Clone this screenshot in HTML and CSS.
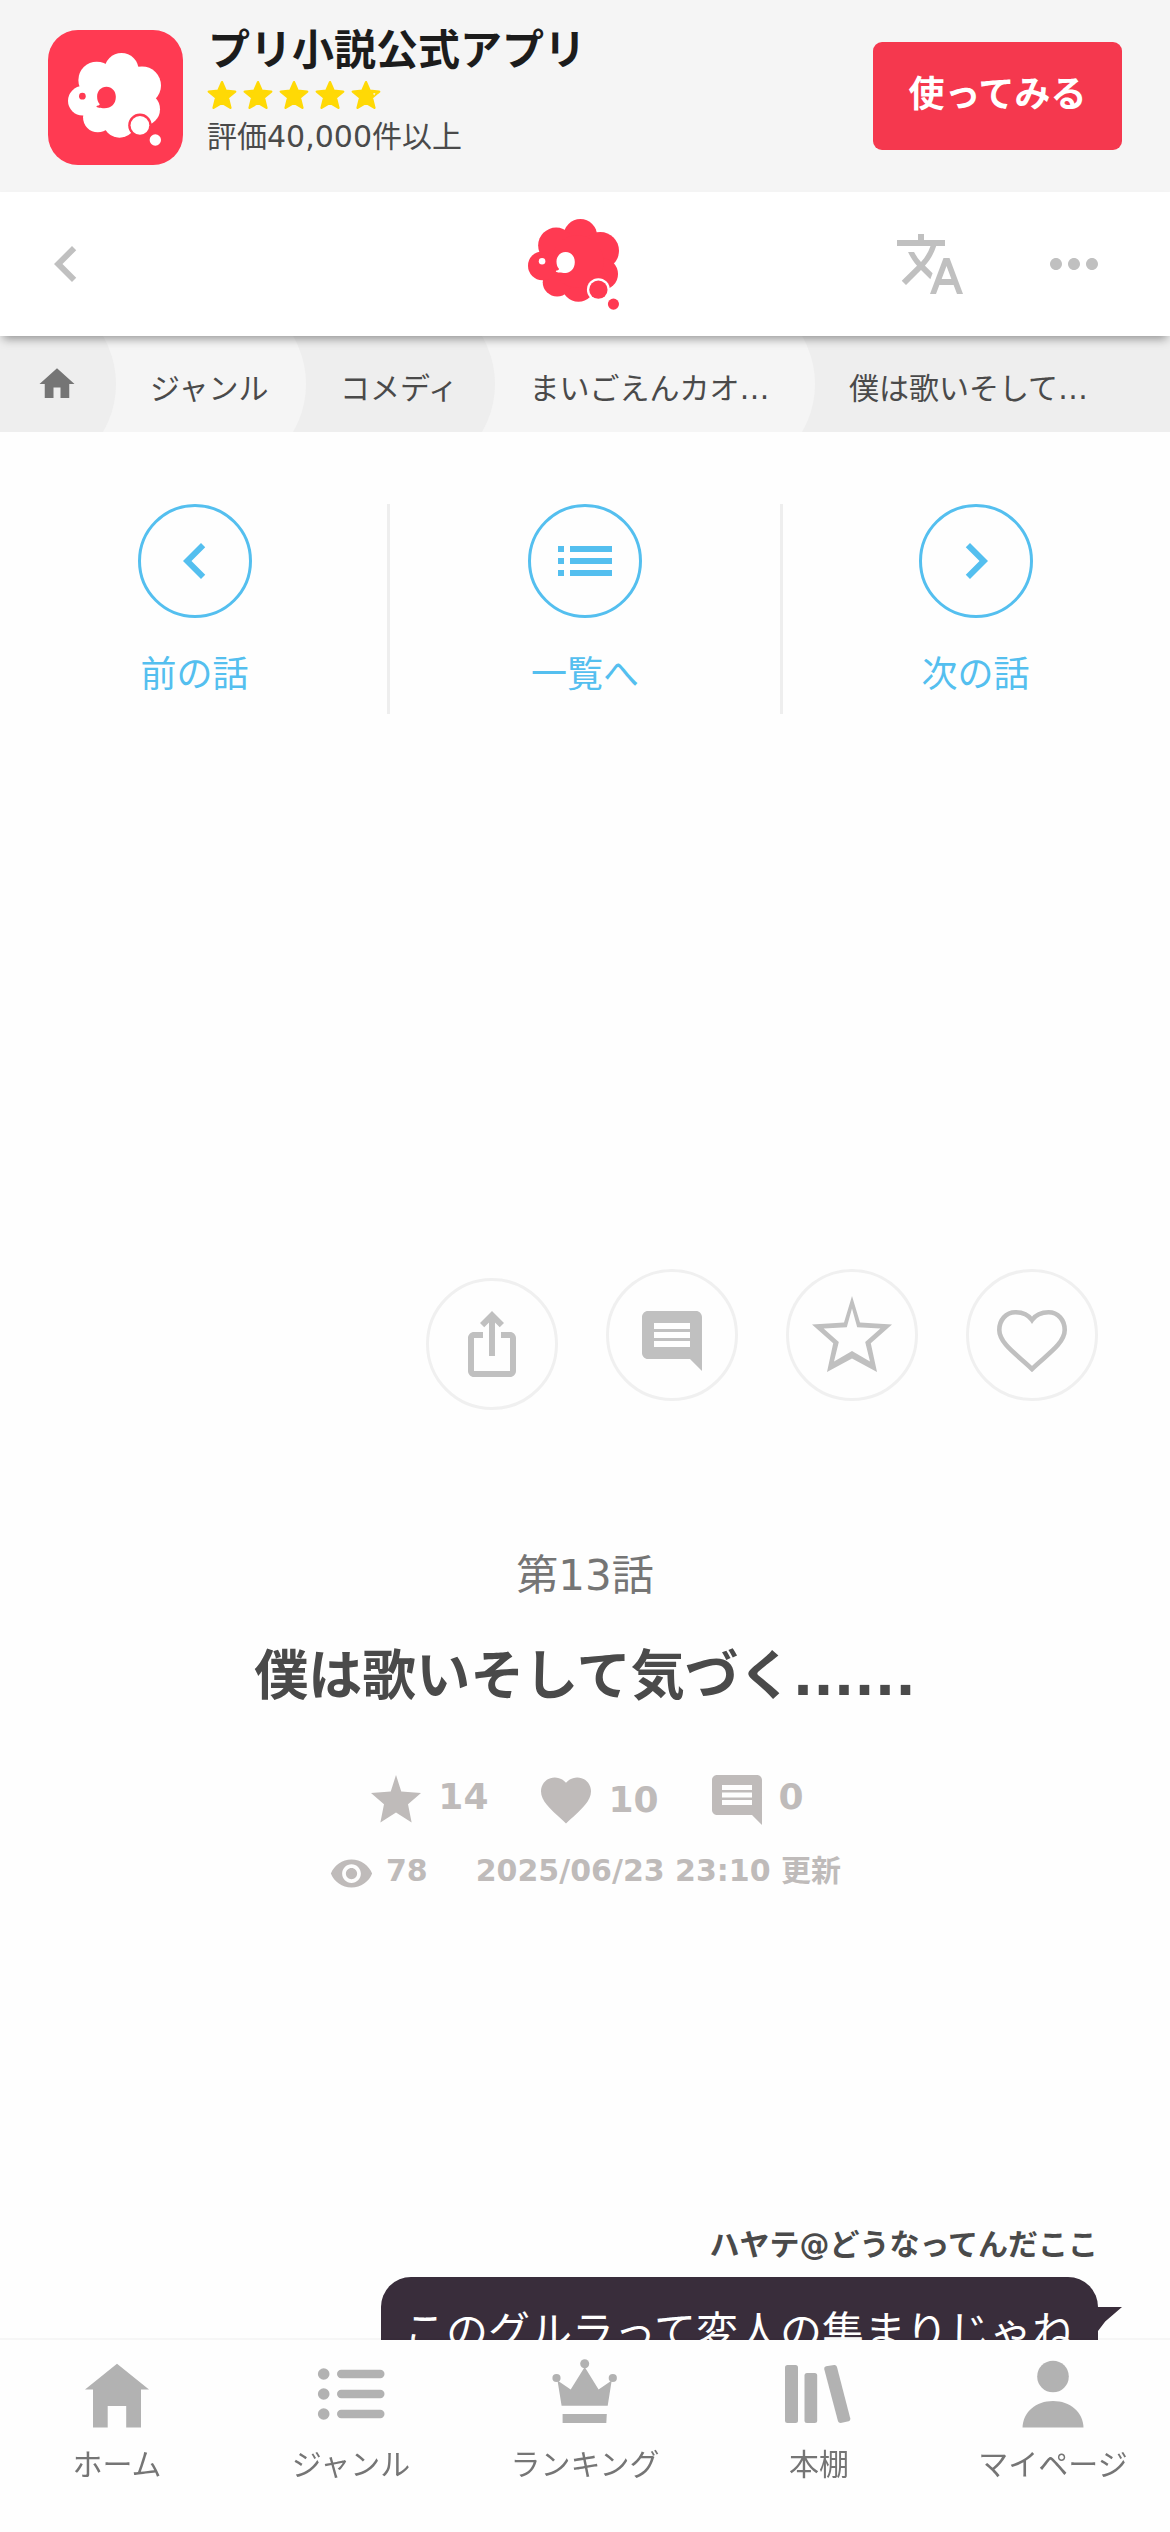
FILE: index.html
```html
<!DOCTYPE html>
<html lang="ja">
<head>
<meta charset="utf-8">
<title>僕は歌いそして気づく......</title>
<link rel="stylesheet" href="styles.css">
</head>
<body>
<svg class="defs" aria-hidden="true">
  <symbol id="sheep" viewBox="204 160 278 278">
    <g fill="currentColor">
      <circle cx="364" cy="211" r="51"/><circle cx="290" cy="241" r="55"/><circle cx="425" cy="257" r="57"/>
      <circle cx="430" cy="328" r="49"/><circle cx="358" cy="363" r="50"/><circle cx="293" cy="353" r="44"/>
      <circle cx="248" cy="303" r="44"/><circle cx="355" cy="290" r="80"/>
    </g>
    <g class="sheep-hole">
      <circle cx="247" cy="289" r="10"/>
      <path d="M291 290c0-16 12-29 28-29s28 13 28 30c0 22-14 34-34 34-12 0-23-1-24-5 0-3 8-2 10-7-5-5-8-13-8-23z"/>
      <circle cx="419" cy="376" r="35"/>
    </g>
    <circle cx="419" cy="376" r="28" fill="currentColor"/>
    <circle cx="465" cy="420" r="17" fill="currentColor"/>
  </symbol>
  <symbol id="rate-star" viewBox="0 0 30 30"><path d="M15 2.2l3.7 8.6 9.5.8-7.3 6.1 2.5 10.1L15 22.8l-8.4 5 2.5-10.1-7.3-6.1 9.5-.8z" fill="currentColor" stroke="currentColor" stroke-width="2.4" stroke-linejoin="round"/></symbol>
  <symbol id="left" viewBox="0 0 24 24"><path d="M15.41 7.41 14 6l-6 6 6 6 1.41-1.41L10.83 12z"/></symbol>
  <symbol id="right" viewBox="0 0 24 24"><path d="M10 6 8.59 7.41 13.17 12l-4.58 4.59L10 18l6-6z"/></symbol>
  <symbol id="comment" viewBox="0 0 24 24"><path d="M21.99 4c0-1.1-.89-2-1.99-2H4c-1.1 0-2 .9-2 2v12c0 1.1.9 2 2 2h14l4 4-.01-18zM18 14H6v-2h12v2zm0-3H6V9h12v2zm0-3H6V6h12v2z"/></symbol>
</svg>

<div class="banner">
  <div class="app-icon"><svg><use href="#sheep"/></svg></div>
  <div class="app-info">
    <p class="app-name">プリ小説公式アプリ</p>
    <div class="stars">
      <svg><use href="#rate-star"/></svg><svg><use href="#rate-star"/></svg><svg><use href="#rate-star"/></svg><svg><use href="#rate-star"/></svg>
      <svg viewBox="0 0 30 30"><use href="#rate-star"/><path class="star-nick" d="M22 13.500l2.500-.500-1.300 2.500zM25.500 15.500l2-1.500v3z"/></svg>
    </div>
    <p class="app-rating">評価40,000件以上</p>
  </div>
  <a class="use-button">使ってみる</a>
</div>

<header class="header">
  <svg class="icon"><use href="#left"/></svg>
  <svg class="logo"><use href="#sheep"/></svg>
  <div class="header-actions">
    <svg class="icon" viewBox="0 0 24 24"><path d="m12.87 15.07-2.54-2.51.03-.03c1.74-1.94 2.98-4.17 3.71-6.53H17V4h-7V2H8v2H1v1.99h11.17C11.5 7.92 10.44 9.75 9 11.35 8.07 10.32 7.3 9.19 6.69 8h-2c.73 1.63 1.73 3.17 2.98 4.56l-5.09 5.02L4 19l5-5 3.11 3.11.76-2.04zM18.5 10h-2L12 22h2l1.12-3h4.75L21 22h2l-4.5-12zm-2.62 7 1.62-4.33L19.12 17h-3.24z"/></svg>
    <svg class="icon" viewBox="0 0 24 24"><path d="M6 10c-1.1 0-2 .9-2 2s.9 2 2 2 2-.9 2-2-.9-2-2-2zm12 0c-1.1 0-2 .9-2 2s.9 2 2 2 2-.9 2-2-.9-2-2-2zm-6 0c-1.1 0-2 .9-2 2s.9 2 2 2 2-.9 2-2-.9-2-2-2z"/></svg>
  </div>
</header>

<ol class="crumbs">
  <li class="crumb crumb-home"><svg viewBox="0 0 24 24"><path d="M10 20v-6h4v6h5v-8h3L12 3 2 12h3v8z"/></svg></li>
  <li class="crumb">ジャンル</li>
  <li class="crumb">コメディ</li>
  <li class="crumb crumb-long"><span>まいごえんカオ…</span></li>
  <li class="crumb crumb-last">僕は歌いそして…</li>
</ol>

<main class="main">
  <nav class="pager">
    <a class="pager-link pager-prev"><span class="ring"><svg><use href="#left"/></svg></span>前の話</a>
    <a class="pager-link pager-list"><span class="ring"><svg viewBox="0 0 24 24"><path d="M3 13h2v-2H3v2zm0 4h2v-2H3v2zm0-8h2V7H3v2zm4 4h14v-2H7v2zm0 4h14v-2H7v2zM7 7v2h14V7H7z"/></svg></span>一覧へ</a>
    <a class="pager-link pager-next"><span class="ring"><svg><use href="#right"/></svg></span>次の話</a>
  </nav>

  <div class="actions">
    <span class="action action-share"><svg viewBox="0 0 24 24"><path d="m16 5-1.42 1.42-1.59-1.59V16h-1.98V4.83L9.42 6.42 8 5l4-4 4 4zm4 5v11c0 1.1-.9 2-2 2H6c-1.11 0-2-.9-2-2V10c0-1.11.89-2 2-2h3v2H6v11h12V10h-3V8h3c1.1 0 2 .89 2 2z"/></svg></span>
    <span class="action action-comment"><svg><use href="#comment"/></svg></span>
    <span class="action action-star"><svg viewBox="0 0 24 24"><path fill-rule="evenodd" d="M12 2 14 8.650 22 9.150 16.700 13.800 18.250 21 12 17.600 5.750 21 7.300 13.800 2 9.150 10 8.650zM12 5.100 10.700 9.800 4.900 10.150 8.700 13.500 7.500 18.400 12 15.750 16.500 18.400 15.300 13.500 19.100 10.150 13.300 9.800z"/></svg></span>
    <span class="action action-heart"><svg viewBox="0 0 70 62"><path d="M35 59C22 46 2.300 34 2.300 20 2.300 10 9 2.300 18.500 2.300 25 2.300 31 4.500 35 10 39 4.500 45 2.300 51.500 2.300 61 2.300 67.700 10 67.700 20 67.700 34 48 46 35 59z"/></svg></span>
  </div>

  <p class="chapter">第13話</p>
  <h1 class="title">僕は歌いそして気づく......</h1>
  <div class="stats">
    <span class="stat"><svg viewBox="0 0 24 24"><path d="M12 2 14.100 8.550 22 9.150 16.800 13.650 18.250 21 12 17 5.750 21 7.200 13.650 2 9.150 9.900 8.550z"/></svg>14</span>
    <span class="stat stat-likes"><svg viewBox="0 0 24 24"><path d="m12 21.350-1.450-1.320C5.400 15.360 2 12.280 2 8.500 2 5.420 4.420 3 7.500 3c1.740 0 3.410.810 4.500 2.090C13.090 3.810 14.760 3 16.500 3 19.580 3 22 5.420 22 8.500c0 3.780-3.400 6.860-8.550 11.540L12 21.350z"/></svg><b>10</b></span>
    <span class="stat"><svg><use href="#comment"/></svg>0</span>
  </div>
  <div class="meta">
    <span class="views"><svg viewBox="0 0 24 24"><path d="M12 4.500C7 4.500 2.730 7.610 1 12c1.730 4.390 6 7.500 11 7.500s9.270-3.110 11-7.500c-1.730-4.390-6-7.500-11-7.500zM12 17c-2.760 0-5-2.240-5-5s2.240-5 5-5 5 2.240 5 5-2.240 5-5 5zm0-8c-1.660 0-3 1.340-3 3s1.340 3 3 3 3-1.340 3-3-1.340-3-3-3z"/></svg>78</span>
    <span>2025/06/23 23:10 更新</span>
  </div>

  <section class="chat">
    <p class="speaker">ハヤテ@どうなってんだここ</p>
    <p class="bubble">このグルラって変人の集まりじゃね</p>
  </section>
</main>

<nav class="tabs">
  <a class="tab"><svg viewBox="81 2358 72 72"><path d="M117 2363.700 149 2389.500H141V2427.500H126.200V2406H107.700V2427.500H93V2389.500H85z"/></svg>ホーム</a>
  <a class="tab"><svg viewBox="315 2358 72 72"><circle cx="323.700" cy="2374" r="5.800"/><circle cx="323.700" cy="2394" r="5.800"/><circle cx="323.700" cy="2414" r="5.800"/><rect x="337" y="2369.800" width="47.500" height="8.400" rx="4.200"/><rect x="337" y="2389.800" width="47.500" height="8.400" rx="4.200"/><rect x="337" y="2409.800" width="47.500" height="8.400" rx="4.200"/></svg>ジャンル</a>
  <a class="tab"><svg viewBox="549 2358 72 72"><circle cx="584.700" cy="2363.700" r="4.500"/><circle cx="556.500" cy="2378" r="4.100"/><circle cx="612.800" cy="2378" r="4.100"/><path d="M557.500 2380.500 570.700 2389.500 584.700 2367 598.600 2389.500 611.700 2380.500 607.700 2405.800H561.600zM562.600 2414H606.800L606.300 2423H562.600z"/></svg>ランキング</a>
  <a class="tab"><svg viewBox="783 2358 72 72"><rect x="785" y="2365" width="13" height="58" rx="2.500"/><rect x="804.500" y="2373" width="12.700" height="50" rx="2.500"/><path d="M826 2366.300 834.200 2364.900Q836.200 2364.700 836.900 2366.700L850.300 2418.500Q850.700 2420.500 848.700 2421.300L840.700 2423.100Q838.700 2423.200 838 2421.300L824.200 2369Q823.900 2367 826 2366.300z"/></svg>本棚</a>
  <a class="tab"><svg viewBox="1017 2358 72 72"><circle cx="1053" cy="2376.500" r="15.800"/><path d="M1022.500 2427.500C1023 2412 1036 2401 1053 2401S1083 2412 1083.500 2427.500z"/></svg>マイページ</a>
</nav>
</body>
</html>
```
FILE: styles.css
```css
* { box-sizing: border-box; margin: 0; padding: 0; }

body {
  display: flex;
  flex-direction: column;
  width: 1170px;
  height: 2532px;
  overflow: hidden;
  background: #fefefe;
  color: #4a4a4a;
  font-family: "DejaVu Sans", "Noto Sans CJK JP", sans-serif;
  font-size: 30px;
}

svg { display: block; flex: none; fill: currentColor; }
.defs { display: none; }

/* App banner */
.banner {
  display: flex;
  flex: none;
  height: 192px;
  padding: 0 48px;
  background: #f5f5f5;
}
.app-icon {
  --hole: #ff3a52;
  width: 135px;
  height: 135px;
  margin-top: 30px;
  padding: 23px 0 0 20px;
  border-radius: 30px;
  background: #ff3a52;
  color: #fff;
}
.app-icon svg { width: 93px; height: 93px; }
.sheep-hole { fill: var(--hole); }
.app-info { flex: 1; padding: 21px 0 0 24px; }
.app-name { padding-left: 1px; color: #1c1c1c; font-size: 42px; font-weight: bold; line-height: 60px; }
.stars { display: flex; gap: 6px; margin-top: -1px; color: #ffd905; }
.stars svg { width: 30px; height: 30px; }
.star-nick { fill: #f5f5f5; }
.app-rating { margin-top: 4px; line-height: 45px; }
.use-button {
  width: 249px;
  height: 108px;
  margin-top: 42px;
  border-radius: 9px;
  background: #f5384e;
  color: #fff;
  font-size: 36px;
  font-weight: bold;
  line-height: 106px;
  text-align: center;
}

/* Header */
.header {
  position: relative;
  z-index: 2;
  display: grid;
  grid-template-columns: 498px 1fr auto;
  flex: none;
  align-items: center;
  height: 144px;
  padding: 0 60px 0 30px;
  background: #fff;
  box-shadow: 0 6px 9px -3px rgba(0, 0, 0, .38);
  color: #c0c0c0;
}
.icon { width: 72px; height: 72px; }
.logo { --hole: #fff; width: 91px; height: 91px; color: #ff3a52; }
.header-actions { display: flex; gap: 72px; }

/* Breadcrumbs: each item overlaps the next with a curved right edge */
.crumbs {
  position: relative;
  z-index: 1;
  display: flex;
  flex: none;
  height: 96px;
  background: #eee;
  list-style: none;
}
.crumb {
  position: relative;
  flex: none;
  margin-left: -13px;
  padding: 0 37.5px 0 47px;
  overflow: hidden;
  line-height: 105px;
  white-space: nowrap;
}
.crumb::before {
  content: "";
  position: absolute;
  z-index: -1;
  inset: -47px 0;
  border-radius: 0 95px 95px 0;
  background: #f5f5f5;
}
.crumb:nth-child(odd)::before { background: #eee; }
.crumb:nth-child(1) { z-index: 5; }
.crumb:nth-child(2) { z-index: 4; }
.crumb:nth-child(3) { z-index: 3; }
.crumb:nth-child(4) { z-index: 2; }
.crumb:nth-child(5) { z-index: 1; }
.crumb-home { width: 116px; margin: 0; padding: 27px 0 0 36px; color: #757575; }
.crumb-home svg { width: 42px; height: 42px; }
.crumb-long span { display: block; width: 248px; }
.crumb-last { flex: 1; }
.crumb-last::before { border-radius: 0; }

/* Episode navigation */
.main { flex: none; }
.pager {
  display: grid;
  grid-template-columns: 387px 396px 387px;
  height: 210px;
  margin-top: 72px;
  color: #54bfef;
  font-size: 36px;
  line-height: 54px;
}
.pager-link { display: flex; flex-direction: column; align-items: center; gap: 30px; }
.pager-prev { padding-left: 2px; }
.pager-next { padding-right: 2px; }
.pager-list { border: solid #eee; border-width: 0 3px; }
.ring {
  display: grid;
  place-items: center;
  width: 114px;
  height: 114px;
  border: 3px solid;
  border-radius: 50%;
}
.ring svg { width: 72px; height: 72px; }

/* Reaction buttons */
.actions {
  display: flex;
  justify-content: flex-end;
  gap: 48px;
  margin-top: 555px;
  padding-right: 72px;
  color: #c0c0c0;
}
.action {
  display: grid;
  place-items: center;
  width: 132px;
  height: 132px;
  border: 3px solid #f0f0f0;
  border-radius: 50%;
}
.action svg { width: 72px; height: 72px; }
.action-share { margin-top: 9px; }
.action-comment svg { margin-top: 12px; }
.action-star svg { width: 96px; height: 96px; margin-top: 2px; }
.action-heart svg { width: 70px; height: 62px; margin-top: 12px; fill: none; stroke: currentColor; stroke-width: 4.6; }

/* Episode heading */
.chapter { margin-top: 134px; color: #757575; font-size: 42px; line-height: 63px; text-align: center; }
.title { margin-top: 29px; font-size: 54px; line-height: 81px; text-align: center; }
.stats {
  display: flex;
  justify-content: center;
  gap: 48px;
  margin-top: 53px;
  color: #bfbbba;
  font-size: 36px;
  font-weight: bold;
  line-height: 54px;
}
.stat { display: flex; gap: 12px; }
.stat svg { width: 60px; height: 60px; }
.stat-likes b { padding-top: 3px; }
.meta {
  display: flex;
  justify-content: center;
  gap: 48px;
  margin-top: 18px;
  color: #bfbbba;
  font-weight: bold;
  line-height: 45px;
}
.views { display: flex; gap: 12px; }
.views svg { width: 45px; height: 45px; margin-top: 3px; }

/* Chat */
.chat { margin-top: 326px; padding-right: 72px; }
.speaker { font-weight: bold; line-height: 45px; text-align: right; }
.bubble {
  position: relative;
  width: 717px;
  height: 120px;
  margin: 10px 0 0 auto;
  padding: 24px 0 0 23px;
  border-radius: 30px;
  background: #392d3b;
  color: #fff;
  font-size: 42px;
  line-height: 63px;
  white-space: nowrap;
}
.bubble::after {
  content: "";
  position: absolute;
  top: 30px;
  left: 100%;
  width: 24px;
  height: 24px;
  background: inherit;
  clip-path: polygon(0 0, 100% 0, 30% 60%, 0 100%);
}

/* Tab bar */
.tabs {
  position: fixed;
  z-index: 10;
  bottom: 0;
  left: 0;
  display: grid;
  grid-template-columns: repeat(5, 1fr);
  width: 1170px;
  height: 192px;
  background: #fefefe;
  box-shadow: 0 -2px 0 rgba(0, 0, 0, .03);
  color: #757575;
  line-height: 45px;
}
.tab { display: flex; flex-direction: column; align-items: center; gap: 12px; padding-top: 18px; }
.tab svg { width: 72px; height: 72px; fill: #b2b2b2; }
```
